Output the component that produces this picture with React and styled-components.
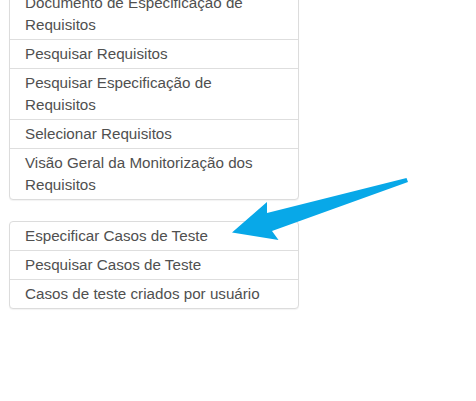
import React from "react";
import styled, { createGlobalStyle } from "styled-components";

const Global = createGlobalStyle`
  html, body { margin: 0; padding: 0; background: #fff; }
  body { font-family: "Liberation Sans", Arial, sans-serif; }
`;

const Page = styled.div`
  position: relative;
  width: 476px;
  height: 401px;
  overflow: hidden;
  padding-left: 9px;
  box-sizing: border-box;
`;

const Menu = styled.ul`
  list-style: none;
  margin: ${(p) => p.$top}px 0 0 0;
  padding: 0;
  width: 290px;
  box-sizing: border-box;
  border: 1px solid #dcdcdc;
  border-radius: 4px;
  background: #fff;
  box-shadow: 0 1px 1px rgba(0, 0, 0, 0.05);
`;

const Item = styled.li`
  padding: 3px 15px;
  font-size: 15.2px;
  line-height: 22px;
  color: #505050;
  border-top: 1px solid #dedede;
  &:first-child { border-top: none; }
`;

const Arrow = styled.svg`
  position: absolute;
  left: 0;
  top: 0;
  pointer-events: none;
`;

const groups = [
  {
    top: -12,
    items: [
      "Documento de Especificação de Requisitos",
      "Pesquisar Requisitos",
      "Pesquisar Especificação de Requisitos",
      "Selecionar Requisitos",
      "Visão Geral da Monitorização dos Requisitos",
    ],
  },
  {
    top: 21,
    items: [
      "Especificar Casos de Teste",
      "Pesquisar Casos de Teste",
      "Casos de teste criados por usuário",
    ],
  },
];

export default function App() {
  return (
    <Page>
      <Global />
      {groups.map((g, i) => (
        <Menu key={i} $top={g.top}>
          {g.items.map((t) => (
            <Item key={t}>{t}</Item>
          ))}
        </Menu>
      ))}
      <Arrow width="476" height="401" viewBox="0 0 476 401">
        <polygon
          points="406.5,178 267,213 267,202 232,232.5 278.5,240 272,231 408,182"
          fill="#08a8e8"
        />
      </Arrow>
    </Page>
  );
}
